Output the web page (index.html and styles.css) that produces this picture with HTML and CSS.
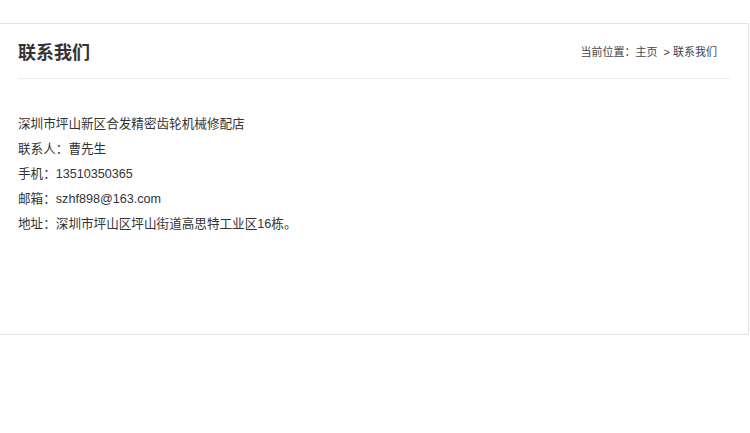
FILE: index.html
```html
<!DOCTYPE html>
<html lang="zh-CN">
<head>
  <meta charset="UTF-8" />
  <meta name="viewport" content="width=device-width, initial-scale=1.0">
  <title>联系我们</title>
  <link rel="stylesheet" href="styles.css">
</head>
<body>
  <div class="page">
    <div class="box">
      <div class="box-head">
        <h2>联系我们</h2>
        <div class="crumb">当前位置：<a href="#">主页</a>&nbsp;&nbsp;&gt; 联系我们</div>
      </div>
      <div class="box-body">
        <p>深圳市坪山新区合发精密齿轮机械修配店</p>
        <p>联系人：曹先生</p>
        <p>手机：13510350365</p>
        <p>邮箱：szhf898@163.com</p>
        <p>地址：深圳市坪山区坪山街道高思特工业区16栋。</p>
      </div>
    </div>
  </div>
</body>
</html>
```

FILE: styles.css
```css
* {
  box-sizing: border-box;
}
body {
  margin: 0;
  background: #fff;
  color: #333;
  font-family: "Liberation Sans", "Noto Sans CJK SC", sans-serif;
}
.page {
  padding-top: 23px;
}
.box {
  width: 749px;
  border: 1px solid #e4e4e4;
  border-left: none;
  padding: 0 18px;
}
.box-head {
  display: flex;
  align-items: center;
  justify-content: space-between;
  height: 55px;
  border-bottom: 1px solid #ececec;
}
.box-head h2 {
  margin: 0;
  font-size: 18px;
  font-weight: bold;
  color: #333;
}
.crumb {
  font-size: 11px;
  color: #444;
  padding-right: 13px;
}
.crumb a {
  color: #444;
  text-decoration: none;
}
.box-body {
  padding: 33px 0 97px;
  font-size: 12.6px;
  line-height: 25px;
}
.box-body p {
  margin: 0;
}
```
